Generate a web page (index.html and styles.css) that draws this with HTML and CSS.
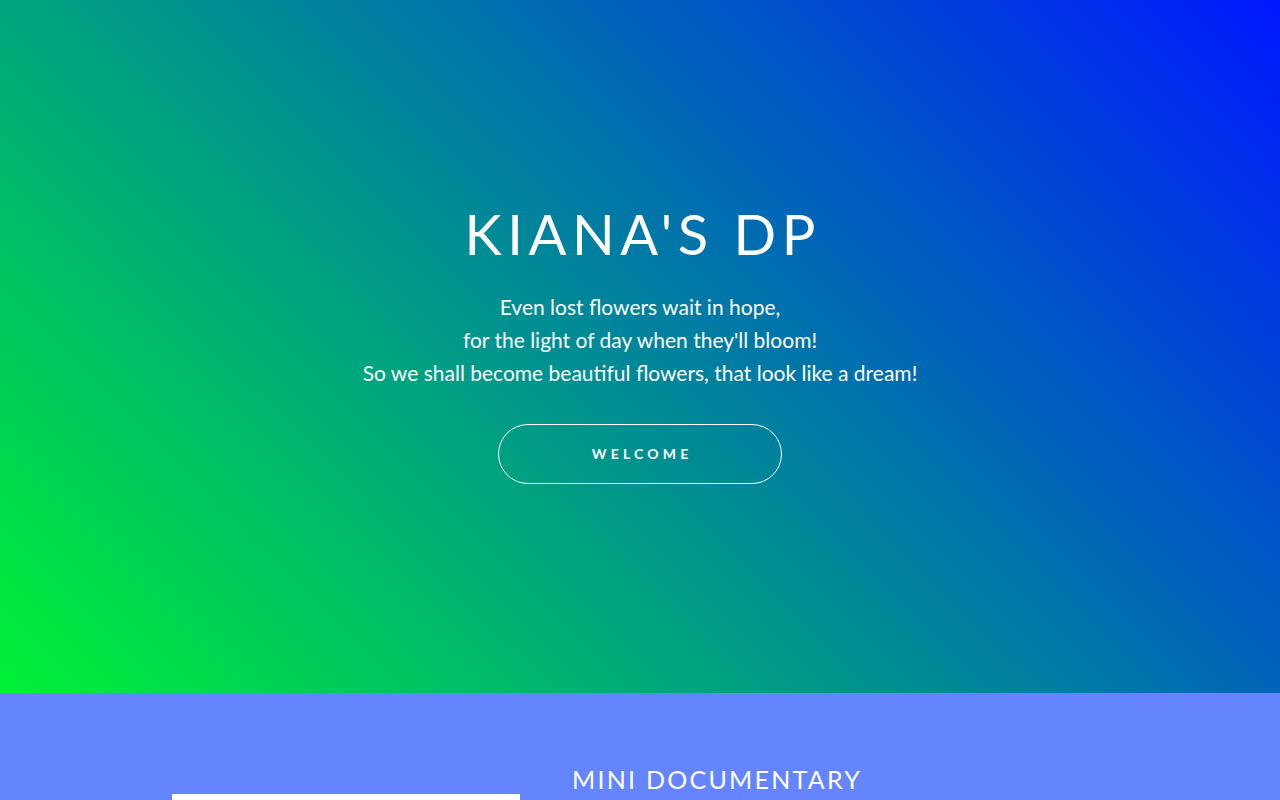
FILE: index.html
```html
<!DOCTYPE html>
<html lang="en">

<head>
    <meta charset="UTF-8">
    <meta name="viewport" content="width=device-width, initial-scale=1.0">
    <title>Kiana's DP</title>
    <link rel="stylesheet" href="styles.css">
</head>

<body>
    <section class="banner">
        <div class="inner">
            <h1>Kiana's DP</h1>
            <p>Even lost flowers wait in hope,<br>
                for the light of day when they'll bloom!<br>
                So we shall become beautiful flowers, that look like a dream!</p>
            <a href="#one" class="button">Welcome</a>
        </div>
    </section>

    <section id="one" class="wrapper">
        <div class="spotlight">
            <div class="image"></div>
            <div class="content">
                <h2>Mini Documentary</h2>
            </div>
        </div>
    </section>
</body>

</html>
```

FILE: styles.css
```css
/* Reset */
* {
    margin: 0;
    padding: 0;
    box-sizing: border-box;
}

body {
    font-family: 'Lato', sans-serif;
    color: #fff;
    background: #6485ff;
}

.banner {
    height: 693px;
    background: linear-gradient(45deg, #00f236 0%, #0018ff 100%);
    display: flex;
    justify-content: center;
    text-align: center;
    padding-top: 206px;
}

.banner h1 {
    font-size: 56px;
    font-weight: 400;
    letter-spacing: 0.1em;
    text-transform: uppercase;
    line-height: 1;
    margin-bottom: 28px;
    padding-left: 0.1em;
}

.banner p {
    font-size: 21px;
    line-height: 33px;
    margin-bottom: 35px;
}

.button {
    display: inline-block;
    width: 284px;
    height: 60px;
    line-height: 58px;
    border: 1px solid #fff;
    border-radius: 30px;
    color: #fff;
    text-decoration: none;
    text-transform: uppercase;
    font-size: 14px;
    font-weight: 700;
    letter-spacing: 0.3em;
    padding-left: 0.3em;
}

.wrapper {
    padding: 74px 0 0;
}

.spotlight {
    width: 936px;
    margin: 0 auto;
    display: flex;
    gap: 52px;
}

.spotlight .image {
    width: 348px;
    height: 240px;
    margin-top: 27px;
    background: #fff;
}

.spotlight h2 {
    font-size: 25px;
    font-weight: 400;
    letter-spacing: 0.09em;
    text-transform: uppercase;
    line-height: 1;
}
```
